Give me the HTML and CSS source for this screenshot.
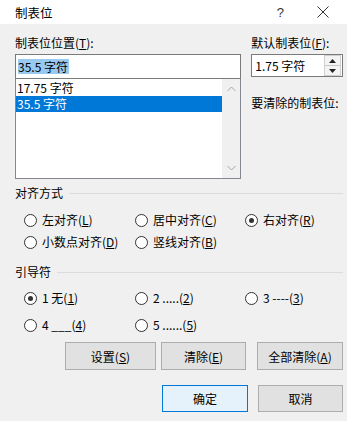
FILE: index.html
```html
<!DOCTYPE html>
<html lang="zh-CN">

<head>
    <meta charset="UTF-8">
    <meta name="viewport" content="width=device-width, initial-scale=1.0">
    <title>制表位</title>
    <link rel="stylesheet" href="styles.css">
</head>

<body>
    <div class="dialog">
        <div class="titlebar">
            <span class="title">制表位</span>
            <span class="help">?</span>
            <span class="close">
                <svg width="12" height="12" viewBox="0 0 12 12">
                    <path d="M0.5 0.5 L11.5 11.5 M11.5 0.5 L0.5 11.5" stroke="#333" stroke-width="1" fill="none" />
                </svg>
            </span>
        </div>

        <div class="content">
            <div class="top">
                <div class="col-left">
                    <div class="label">制表位位置(<u>T</u>):</div>
                    <div class="textbox"><span class="sel">35.5 字符</span></div>
                    <div class="listbox">
                        <div class="items">
                            <div class="item">17.75 字符</div>
                            <div class="item active">35.5 字符</div>
                        </div>
                        <div class="scrollbar">
                            <svg width="9" height="6" viewBox="0 0 9 6">
                                <path d="M0.5 5 L4.5 1 L8.5 5" stroke="#a6a6a6" stroke-width="1" fill="none" />
                            </svg>
                            <svg width="9" height="6" viewBox="0 0 9 6">
                                <path d="M0.5 1 L4.5 5 L8.5 1" stroke="#a6a6a6" stroke-width="1" fill="none" />
                            </svg>
                        </div>
                    </div>
                </div>
                <div class="col-right">
                    <div class="label">默认制表位(<u>F</u>):</div>
                    <div class="spin">
                        <span class="spin-value">1.75 字符</span>
                        <span class="spin-buttons">
                            <span class="spin-btn">
                                <svg width="7" height="4" viewBox="0 0 7 4"><path d="M0 4 L3.5 0 L7 4 Z" fill="#222" /></svg>
                            </span>
                            <span class="spin-btn">
                                <svg width="7" height="4" viewBox="0 0 7 4"><path d="M0 0 L3.5 4 L7 0 Z" fill="#222" /></svg>
                            </span>
                        </span>
                    </div>
                    <div class="label clear-label">要清除的制表位:</div>
                </div>
            </div>

            <div class="group-title"><span>对齐方式</span></div>
            <div class="radios align-radios">
                <label class="radio"><span class="dot"></span>左对齐(<u>L</u>)</label>
                <label class="radio"><span class="dot"></span>居中对齐(<u>C</u>)</label>
                <label class="radio"><span class="dot checked"></span>右对齐(<u>R</u>)</label>
                <label class="radio"><span class="dot"></span>小数点对齐(<u>D</u>)</label>
                <label class="radio"><span class="dot"></span>竖线对齐(<u>B</u>)</label>
            </div>

            <div class="group-title leader-title"><span>引导符</span></div>
            <div class="radios leader-radios">
                <label class="radio"><span class="dot checked"></span>1 无(<u>1</u>)</label>
                <label class="radio"><span class="dot"></span>2 .....(<u>2</u>)</label>
                <label class="radio"><span class="dot"></span>3 ----(<u>3</u>)</label>
                <label class="radio"><span class="dot"></span>4 ___(<u>4</u>)</label>
                <label class="radio"><span class="dot"></span>5 ......(<u>5</u>)</label>
            </div>

            <div class="buttons first-row">
                <button class="btn btn-set">设置(<u>S</u>)</button>
                <button class="btn btn-clear">清除(<u>E</u>)</button>
                <button class="btn btn-clear-all">全部清除(<u>A</u>)</button>
            </div>
            <div class="buttons second-row">
                <button class="btn btn-ok default">确定</button>
                <button class="btn btn-cancel">取消</button>
            </div>
        </div>
    </div>
</body>

</html>
```

FILE: styles.css
```css
body {
    margin: 0;
    padding: 0;
    background-color: #f0f0f0;
    font-family: "Noto Sans CJK SC", "Noto Sans", sans-serif;
    font-size: 12px;
    color: #000;
}

u {
    text-decoration: underline;
    text-underline-offset: 1px;
}

.dialog {
    width: 347px;
    height: 421px;
    overflow: hidden;
}

.titlebar {
    height: 24px;
    background-color: #fff;
    display: flex;
    align-items: center;
}

.title {
    margin-left: 15px;
    font-size: 12.5px;
    flex: 1;
}

.help {
    font-family: "Liberation Sans", sans-serif;
    font-size: 13px;
    color: #333;
    margin-right: 33px;
}

.close {
    display: flex;
    margin-right: 18px;
}

.content {
    padding: 11px 4px 0 15px;
}

.top {
    display: flex;
    gap: 10px;
}

.col-left {
    width: 227px;
}

.col-right {
    width: 92px;
}

.label {
    line-height: 16px;
    height: 16px;
}

.textbox {
    margin-top: 3px;
    height: 23px;
    border: 1px solid #7a7a7a;
    background-color: #fff;
    display: flex;
    align-items: center;
    padding-left: 2px;
}

.sel {
    background-color: #99c9ef;
    line-height: 15px;
    padding-right: 1px;
}

.listbox {
    height: 99px;
    border: 1px solid #828790;
    border-top: none;
    background-color: #fff;
    display: flex;
}

.items {
    flex: 1;
    padding-top: 1px;
}

.item {
    height: 16px;
    line-height: 16px;
    padding-left: 1px;
}

.item.active {
    background-color: #0078d7;
    color: #fff;
}

.scrollbar {
    width: 18px;
    background-color: #f0f0f0;
    display: flex;
    flex-direction: column;
    justify-content: space-between;
    align-items: center;
    padding: 7px 0 7px;
}

.spin {
    margin-top: 3px;
    height: 21px;
    border: 1px solid #7a7a7a;
    background-color: #fff;
    display: flex;
    align-items: center;
}

.spin-value {
    flex: 1;
    padding-left: 3px;
}

.spin-buttons {
    display: flex;
    flex-direction: column;
    height: 19px;
    width: 15px;
    margin-right: 1px;
    border: 1px solid #d0d0d0;
}

.spin-btn {
    flex: 1;
    display: flex;
    align-items: center;
    justify-content: center;
    background-color: #f4f4f4;
}

.spin-btn + .spin-btn {
    border-top: 1px solid #c8c8c8;
}

.clear-label {
    margin-top: 18px;
}

.group-title {
    display: flex;
    align-items: center;
    line-height: 16px;
    margin-top: 6px;
}

.group-title::after {
    content: "";
    flex: 1;
    height: 1px;
    background-color: #dcdcdc;
    margin-left: 6px;
}

.leader-title {
    margin-top: 14px;
}

.radios {
    display: grid;
    grid-template-columns: 111px 110px auto;
    padding-left: 9px;
    margin-top: 11px;
    row-gap: 6px;
}

.leader-radios {
    margin-top: 10px;
    row-gap: 11px;
}

.radio {
    display: flex;
    align-items: center;
    line-height: 16px;
    height: 16px;
    white-space: nowrap;
}

.dot {
    width: 11px;
    height: 11px;
    border: 1px solid #333;
    border-radius: 50%;
    background-color: #fff;
    margin-right: 5px;
    position: relative;
}

.dot.checked::after {
    content: "";
    position: absolute;
    left: 3px;
    top: 3px;
    width: 5px;
    height: 5px;
    border-radius: 50%;
    background-color: #333;
}

.buttons {
    display: flex;
    justify-content: flex-end;
}

.first-row {
    margin-top: 9px;
}

.second-row {
    margin-top: 15px;
}

.btn {
    font-family: inherit;
    font-size: 12px;
    color: #000;
    height: 28px;
    background-color: #e1e1e1;
    border: 1px solid #adadad;
    padding: 0;
    margin: 0;
}

.btn-set {
    width: 91px;
}

.btn-clear {
    width: 85px;
    margin-left: 5px;
}

.btn-clear-all {
    width: 86px;
    margin-left: 11px;
}

.btn-ok {
    width: 86px;
    height: 27px;
}

.btn-cancel {
    width: 85px;
    height: 27px;
    margin-left: 10px;
}

.btn.default {
    background-color: #e5f1fb;
    border-color: #0078d7;
}
```
